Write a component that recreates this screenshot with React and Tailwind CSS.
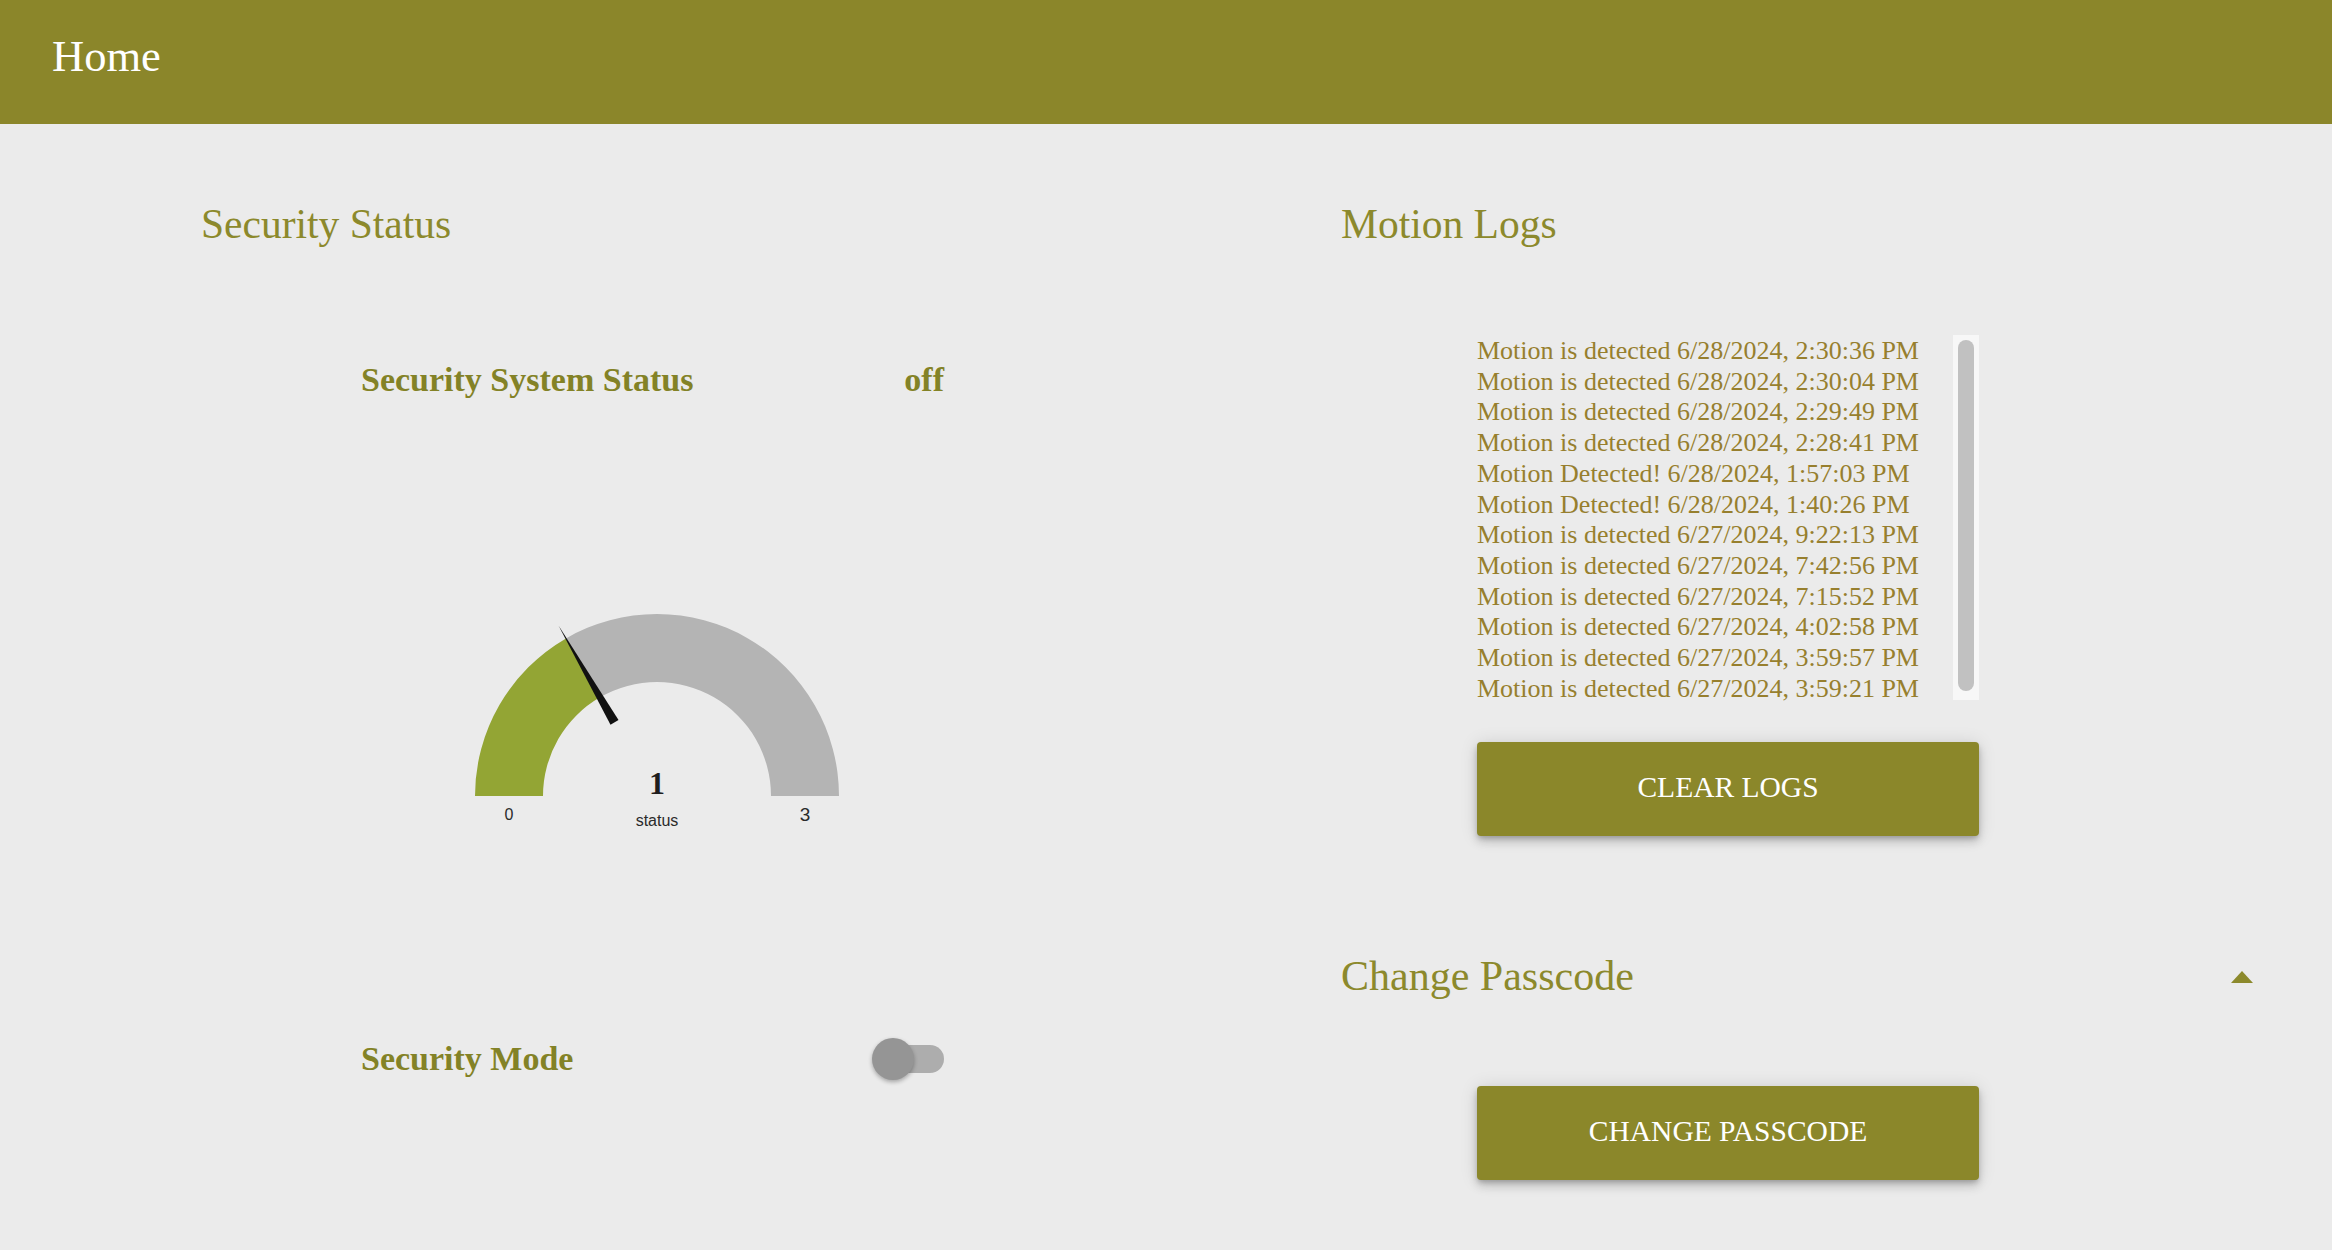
import React from "react";

const logs = [
  "Motion is detected 6/28/2024, 2:30:36 PM",
  "Motion is detected 6/28/2024, 2:30:04 PM",
  "Motion is detected 6/28/2024, 2:29:49 PM",
  "Motion is detected 6/28/2024, 2:28:41 PM",
  "Motion Detected! 6/28/2024, 1:57:03 PM",
  "Motion Detected! 6/28/2024, 1:40:26 PM",
  "Motion is detected 6/27/2024, 9:22:13 PM",
  "Motion is detected 6/27/2024, 7:42:56 PM",
  "Motion is detected 6/27/2024, 7:15:52 PM",
  "Motion is detected 6/27/2024, 4:02:58 PM",
  "Motion is detected 6/27/2024, 3:59:57 PM",
  "Motion is detected 6/27/2024, 3:59:21 PM",
];

function Gauge() {
  return (
    <svg width="420" height="240" viewBox="0 0 420 240" className="block">
      <path
        d="M 28 190 A 182 182 0 0 1 119 32.4 L 153 91.3 A 114 114 0 0 0 96 190 Z"
        fill="#93a534"
      />
      <path
        d="M 119 32.4 A 182 182 0 0 1 392 190 L 324 190 A 114 114 0 0 0 153 91.3 Z"
        fill="#b4b4b4"
      />
      <polygon points="171.5,114.1 163.5,118.7 111.5,19.4" fill="#111111" />
      <text
        x="210"
        y="187.5"
        textAnchor="middle"
        fontFamily="'Liberation Serif', serif"
        fontWeight="700"
        fontSize="32"
        fill="#1e1e1e"
      >
        1
      </text>
      <text
        x="210"
        y="220"
        textAnchor="middle"
        fontFamily="'Liberation Sans', Arial, sans-serif"
        fontSize="16"
        fill="#2a2a2a"
      >
        status
      </text>
      <text
        x="62"
        y="214.3"
        textAnchor="middle"
        fontFamily="'Liberation Sans', Arial, sans-serif"
        fontSize="16"
        fill="#2a2a2a"
      >
        0
      </text>
      <text
        x="358"
        y="215"
        textAnchor="middle"
        fontFamily="'Liberation Sans', Arial, sans-serif"
        fontSize="19"
        fill="#2a2a2a"
      >
        3
      </text>
    </svg>
  );
}

function Button({ children }) {
  return (
    <button className="ml-[136px] w-[502px] h-[94px] rounded-[4px] bg-[#8b872a] text-white text-[29.5px] leading-none uppercase shadow-[0_3px_5px_-1px_rgba(0,0,0,0.2),0_6px_10px_0_rgba(0,0,0,0.14),0_1px_18px_0_rgba(0,0,0,0.12)] flex items-center justify-center pb-[2px]">
      {children}
    </button>
  );
}

export default function App() {
  return (
    <div className="min-h-screen bg-[#ebebeb] font-['Liberation_Serif',serif]">
      <header className="h-[124px] bg-[#8b862a] pl-[52px] pt-[31px]">
        <div className="text-white text-[44.5px] leading-[50px]">Home</div>
      </header>

      <main className="flex pt-[76px] pl-[201px]">
        {/* Left column */}
        <section className="w-[1140px] flex flex-col">
          <h2 className="text-[41.5px] leading-[48px] text-[#8c892c]">Security Status</h2>

          <div className="mt-[112px] ml-[160px] w-[583px] h-[40px] flex items-center justify-between text-[34px] leading-[40px] font-bold text-[#838226]">
            <span>Security System Status</span>
            <span>off</span>
          </div>

          <div className="mt-[206px] ml-[246px]">
            <Gauge />
          </div>

          <div className="mt-[193px] ml-[160px] w-[583px] h-[40px] flex items-center justify-between">
            <span className="text-[34px] leading-[40px] font-bold text-[#838226]">Security Mode</span>
            <div className="relative w-[72px] h-[42px]">
              <div className="absolute right-0 top-[7px] w-[58px] h-[28px] rounded-full bg-[#adadad]" />
              <div className="absolute left-0 top-0 w-[42px] h-[42px] rounded-full bg-[#959595] shadow-[0_2px_4px_rgba(0,0,0,0.3)]" />
            </div>
          </div>
        </section>

        {/* Right column */}
        <section className="w-[912px] flex flex-col">
          <h2 className="text-[41.5px] leading-[48px] text-[#8c892c]">Motion Logs</h2>

          <div className="mt-[87px] ml-[136px] w-[502px] h-[365px] flex">
            <div className="flex-1 h-[365px] pt-[1px] text-[26px] leading-[30.7px] text-[#977f2e] whitespace-nowrap">
              {logs.map((l, i) => (
                <div key={i}>{l}</div>
              ))}
            </div>
            <div className="w-[26px] h-full bg-[#f7f7f7] px-[5px] pt-[5px]">
              <div className="w-full h-[351px] rounded-full bg-[#c1c1c1]" />
            </div>
          </div>

          <div className="mt-[42px]">
            <Button>Clear Logs</Button>
          </div>

          <div className="mt-[116px] flex items-center justify-between">
            <h2 className="text-[42px] leading-[48px] text-[#8c892c]">Change Passcode</h2>
            <svg width="22" height="12" viewBox="0 0 22 12" className="block mt-[2px]">
              <polygon points="11,0 22,12 0,12" fill="#8c892c" />
            </svg>
          </div>

          <div className="mt-[86px]">
            <Button>Change Passcode</Button>
          </div>
        </section>
      </main>
    </div>
  );
}
